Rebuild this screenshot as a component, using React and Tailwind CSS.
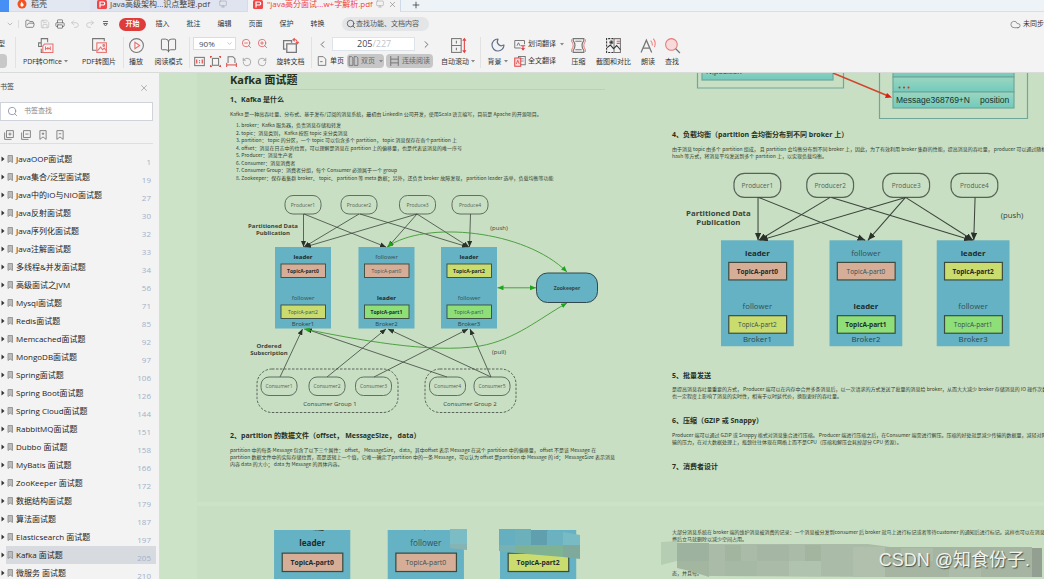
import React from "react";
import {
  FolderOpen, Save, Printer, Undo2, Redo2, ChevronDown, ChevronLeft, ChevronRight, Search, X, Plus,
  Monitor, BookOpen, CirclePlay, ZoomIn, ZoomOut, Moon, Cloud, RotateCcw, RotateCw,
} from "lucide-react";

const BOOKMARKS = [
  ["JavaOOP面试题", 1], ["Java集合/泛型面试题", 19], ["Java中的IO与NIO面试题", 27], ["Java反射面试题", 30],
  ["Java序列化面试题", 32], ["Java注解面试题", 33], ["多线程&并发面试题", 34], ["高级面试之JVM", 56],
  ["Mysql面试题", 71], ["Redis面试题", 85], ["Memcached面试题", 92], ["MongoDB面试题", 97],
  ["Spring面试题", 106], ["Spring Boot面试题", 126], ["Spring Cloud面试题", 144], ["RabbitMQ面试题", 151],
  ["Dubbo 面试题", 158], ["MyBatis 面试题", 166], ["ZooKeeper 面试题", 172], ["数据结构面试题", 179],
  ["算法面试题", 187], ["Elasticsearch 面试题", 197], ["Kafka 面试题", 205], ["微服务 面试题", 210],
];

const Ico = ({ children, w = 16, h = 16, className = "" }) => (
  <svg width={w} height={h} viewBox="0 0 16 16" fill="none" stroke="#777" strokeWidth="1" className={className} aria-hidden="true">
    {children}
  </svg>
);

const PdfBadge = () => (
  <svg width="10" height="9" viewBox="0 0 10 9" aria-hidden="true">
    <rect width="10" height="9" rx="1.5" fill="#f04848" />
    <path d="M3 7.500V2h3.2a1.5 1.5 0 0 1 0 3H3" fill="none" stroke="#fff" strokeWidth="1.2" />
  </svg>
);

function TabBar() {
  return (
    <div className="flex h-3 shrink-0 items-stretch overflow-hidden bg-[#eef3f8] text-[8px] leading-[8px] text-[#444]">
      <div className="w-[9px] shrink-0 bg-[#458ff5]" />
      <div className="flex w-[81px] shrink-0 items-start gap-1 border-b border-[#d3dce8] bg-[#e3e7f1] pl-2">
        <svg width="10" height="9" viewBox="0 0 10 9" aria-hidden="true">
          <circle cx="5" cy="4" r="4.5" fill="#f4511e" />
          <path d="M4 6.5Q2.5 4 5 1.5Q5 3 6.5 4Q7 6 5.500 6.500Z" fill="#fff" />
        </svg>
        <span>稻壳</span>
      </div>
      <div className="flex w-[158px] shrink-0 items-start border-b border-r border-[#d3dce8] bg-[#dfe4f0] pl-[7px]">
        <PdfBadge />
        <span className="ml-[3px] w-[98px] whitespace-nowrap">Java高级架构...识点整理.pdf</span>
        <Monitor size={8} strokeWidth={1.5} className="ml-[11px] text-[#999]" />
      </div>
      <div className="flex w-[153px] shrink-0 items-start border-r border-[#cfdae6] bg-[#f3f3f3] pl-[5px] text-[#f04040]">
        <PdfBadge />
        <span className="ml-[4px] whitespace-nowrap">"java高分面试...w+字解析.pdf</span>
        <Monitor size={8} strokeWidth={1.5} className="ml-[3px] shrink-0 text-[#999]" />
        <button aria-label="关闭标签" className="ml-1"><X size={9} strokeWidth={1.5} className="text-[#777]" /></button>
      </div>
      <div className="flex flex-1 items-start border-b border-[#d5e0e8] pl-[10px]">
        <button aria-label="新建标签"><Plus size={10} strokeWidth={2} className="text-[#444]" /></button>
      </div>
    </div>
  );
}

function MenuBar() {
  const quick = [["打开", FolderOpen, "text-[#555]"], ["保存", Save, "text-[#bbb]"], ["打印", Printer, "text-[#555]"], ["撤销", Undo2, "text-[#bbb]"], ["重做", Redo2, "text-[#bbb]"]];
  const menus = ["插入", "批注", "编辑", "页面", "保护", "转换"];
  return (
    <div className="flex h-6 shrink-0 items-center text-[7px] text-[#333]">
      <button aria-label="展开" className="flex w-[19px] items-center border-r border-[#ddd] pl-[6px]"><ChevronDown size={8} strokeWidth={1.5} className="text-[#888]" /></button>
      <div className="flex w-[100px] items-center gap-[5px] pl-[6px]">
        {quick.map(([label, Icon, color]) => (
          <button key={label} aria-label={label}><Icon size={10} strokeWidth={1.6} className={color} /></button>
        ))}
        <button aria-label="更多" className="pl-[3px]"><svg width="5" height="6" viewBox="0 0 5 6" fill="none" stroke="#666" aria-hidden="true"><path d="M0 .5H5M.5 2.500H4.500L2.500 5Z" /></svg></button>
      </div>
      <button className="h-[13px] w-[27px] rounded-full bg-[#e03b3b] font-bold text-white">开始</button>
      <nav className="flex w-[190px] pl-px">
        {menus.map((m) => <button key={m} className="w-[31px]">{m}</button>)}
      </nav>
      <label className="ml-[6px] flex h-[14px] w-[87px] items-center rounded-full bg-[#e3e5e7] pl-[4px]">
        <Search size={10} strokeWidth={2} className="shrink-0 text-[#555]" />
        <input aria-label="查找" placeholder="查找功能、文档内容" className="w-[72px] bg-transparent text-[7px] placeholder:text-[#555] placeholder:opacity-100" />
      </label>
      <div className="flex flex-1 items-center justify-end overflow-hidden">
        <button className="flex items-center gap-[2px] whitespace-nowrap"><Cloud size={11} strokeWidth={1.5} className="text-[#666]" />未同步</button>
      </div>
    </div>
  );
}

const Caret = () => <svg width="4" height="3" viewBox="0 0 4 3" className="ml-[2px]" aria-hidden="true"><path d="M0 0h4L2 2.500z" fill="#888" /></svg>;
const Tool = ({ label, w, children, sep, arrow }) => (
  <button className={`flex h-[31px] shrink-0 flex-col items-center justify-between whitespace-nowrap pb-[2px] ${w} ${sep ? "border-r border-[#e2e2e2]" : ""}`}>
    {children}
    <span className="flex items-center leading-[9px]">{label}{arrow && <Caret />}</span>
  </button>
);

function Toolbar() {
  return (
    <div className="flex h-[37px] shrink-0 items-start overflow-hidden border-b border-[#d8dcd8] pt-px text-[7px] text-[#333]">
      <div className="flex h-[31px] w-4 shrink-0 flex-col justify-between border-r border-[#e2e2e2]">
        <span className="-ml-[2px] pt-[2px] leading-[10px]">型</span>
        <span className="h-[14px] w-[7px] rounded-r-sm bg-[#c8c8c8]" />
      </div>
      <Tool label="PDF转Office" w="w-[59px]" arrow>
        <Ico w={17} h={17}><path d="M5 9H1.500V5.500H4V1.500H10V5M4 5.500V9M4 11V14.500H8" /><g stroke="#e87070"><path d="M7 6.500H15V14.500H5.500V8.500Z" fill="#f3f3f3" /><path d="M8 9V12.500M8 10.800H12.500M12.500 9V12.500M10.200 9.500V12" /></g></Ico>
      </Tool>
      <Tool label="PDF转图片" w="w-[49px]" sep>
        <Ico w={17} h={17}><path d="M5 12.500H1.500V1.500H12.500V4" /><g stroke="#e87070"><rect x="5.500" y="5.500" width="9" height="9" fill="#f3f3f3" /><path d="M6 13L9 9.500L11 12L12.500 10.500L14.500 13" /><circle cx="12" cy="8" r=".8" /></g></Ico>
      </Tool>
      <Tool label="播放" w="w-[24px]">
        <Ico w={17} h={17}><circle cx="8" cy="8" r="6.500" /><path d="M6.500 5L11 8L6.500 11Z" stroke="#e87070" /></Ico>
      </Tool>
      <Tool label="阅读模式" w="w-[42px]" sep><BookOpen size={17} strokeWidth={1.300} className="text-[#666]" /></Tool>
      <div className="flex h-[31px] w-[80px] shrink-0 flex-col justify-between pl-[3px]">
        <div className="flex items-center gap-[5px]">
          <span className="relative flex h-[13px] w-[43px] items-center border border-[#d9dde3] bg-white">
            <select aria-label="缩放比例" className="w-full appearance-none bg-transparent pl-[5px] text-[8px] leading-[11px] text-[#3c4a60]"><option>90%</option></select>
            <ChevronDown size={7} strokeWidth={1.500} className="pointer-events-none absolute right-[2px] text-[#888]" />
          </span>
          <button aria-label="缩小"><ZoomOut size={11} strokeWidth={1.800} className="text-[#e06060]" /></button>
          <button aria-label="放大"><ZoomIn size={11} strokeWidth={1.800} className="text-[#e06060]" /></button>
        </div>
        <div className="flex items-center gap-[5px] pb-px pl-px">
          <button aria-label="实际大小"><Ico w={11} h={11}><rect x="1" y="2" width="14" height="12" strokeWidth="1.500" /><path d="M4 5V11M12 5V11M8 6V7.500M8 9V10.500" stroke="#e04040" strokeWidth="1.600" /></Ico></button>
          <button aria-label="适合页面"><Ico w={11} h={11}><rect x="3.500" y="3.500" width="9" height="10" strokeWidth="1.500" /><path d="M0 1H3M1 0V3M13 1H16M15 0V3M0 15H3M1 13V16M13 15H16M15 13V16" stroke="#e04040" strokeWidth="1.400" /></Ico></button>
          <button aria-label="适合宽度"><Ico w={11} h={11}><path d="M3 10V1H10L13 4V10" strokeWidth="1.500" /><path d="M1 10V16M15 10V16M1 13H15" stroke="#e04040" strokeWidth="1.400" /></Ico></button>
          <button aria-label="向左旋转"><RotateCcw size={10} strokeWidth={1.600} className="text-[#888]" /></button>
          <button aria-label="向右旋转"><RotateCw size={10} strokeWidth={1.600} className="text-[#888]" /></button>
        </div>
      </div>
      <Tool label="旋转文档" w="w-[42px]" sep>
        <Ico w={17} h={17}><path d="M3.500 11.500H1.500V3.500H9V5.500M4.500 6.500H13.500V14.500H4.500Z" strokeWidth="1.200" /><path d="M10.500 2.500Q14.500 1.500 14.500 6M13 4.500L14.500 6.200L16 4.500M12 1L10.300 2.500L12 4" stroke="#e85555" /></Ico>
      </Tool>
      <div className="flex h-[31px] w-[124px] shrink-0 flex-col justify-between pl-[5px]">
        <div className="flex items-center">
          <button aria-label="上一页"><ChevronLeft size={11} strokeWidth={1.800} className="text-[#555]" /></button>
          <div className="ml-[4px] flex h-[14px] w-[83px] items-center justify-center border border-[#dce3ea] bg-white text-[9px]">
            <input aria-label="页码" defaultValue="205" className="w-[30px] bg-transparent text-right text-[#3c4a60]" />
            <span className="w-[32px] text-[#c0c4ca]">/227</span>
          </div>
          <button aria-label="下一页" className="ml-[6px]"><ChevronRight size={11} strokeWidth={1.800} className="text-[#555]" /></button>
        </div>
        <div className="flex h-[14px] items-center gap-[2px]">
          <button className="flex w-[28px] items-center gap-[3px] whitespace-nowrap"><Ico w={10} h={10} className="shrink-0"><path d="M2 1H10L14 5V15H2ZM5 9H9" strokeWidth="1.500" /></Ico>单页</button>
          <button className="flex h-[14px] w-[37px] items-center justify-center gap-[2px] whitespace-nowrap rounded-sm bg-[#c6c6c6] text-[#666]"><Ico w={11} h={10} className="shrink-0"><path d="M1 1H5L7 3V15H1ZM9 1H13L15 3V15H9Z" strokeWidth="1.500" /></Ico>双页<Caret /></button>
          <button className="flex h-[14px] w-[47px] items-center justify-center gap-[2px] whitespace-nowrap rounded-sm bg-[#c6c6c6] text-[#666]"><Ico w={11} h={10} className="shrink-0"><path d="M2 0V16M14 0V16M2 5H14M2 11H14" strokeWidth="1.600" /></Ico>连续阅读</button>
        </div>
      </div>
      <Tool label="自动滚动" w="w-[45px]" sep arrow>
        <Ico w={17} h={17}><rect x="1.500" y="1.500" width="9" height="13" /><path d="M1.500 8H10.500M6 3.500V6M6 10V12.500" /><path d="M13.500 1.500V14.500M12 3.500L13.500 1.500L15 3.500M12 12.500L13.500 14.500L15 12.500" stroke="#e04040" /></Ico>
      </Tool>
      <Tool label="背景" w="w-[33px]" arrow><Moon size={16} strokeWidth={1.800} className="text-[#62708c]" /></Tool>
      <div className="flex h-[31px] w-[52px] shrink-0 flex-col justify-between">
        <button className="flex h-[15px] items-center gap-[2px] whitespace-nowrap"><Ico w={12} h={12} className="shrink-0"><path d="M9 12H1V2H14V7M4 9L6 5L8 9" strokeWidth="1.300" /><path d="M9 9H15M12 9V14M10 12L12 14.500L14 12" stroke="#e04040" strokeWidth="1.500" /></Ico>划词翻译<Caret /></button>
        <button className="flex h-[14px] items-center gap-[2px] whitespace-nowrap"><Ico w={12} h={12} className="shrink-0"><rect x="6" y="2" width="9" height="11" strokeWidth="1.300" /><path d="M9 5H13M9 8H13" /><rect x="1" y="4" width="8" height="11" fill="#f8dada" stroke="#e04040" strokeWidth="1.300" /><path d="M3 12L5 7L7 12" stroke="#e04040" /></Ico>全文翻译</button>
      </div>
      <Tool label="压缩" w="w-[25px]">
        <Ico w={17} h={17}><path d="M3 1.500H13V3.500Q9.500 8 13 12.500V14.500H3V12.500Q6.500 8 3 3.500ZM5 4H11M5 12H11" strokeWidth="1.100" /><path d="M1.500 2V4Q4.500 8 1.500 12V14M14.500 2V4Q11.500 8 14.500 12V14" stroke="#f08a8a" /></Ico>
      </Tool>
      <Tool label="截图和对比" w="w-[45px]">
        <Ico w={17} h={17}><path d="M8 1.500H1.500V14.500H8" strokeDasharray="2 1" stroke="#333" /><path d="M8.500 1.500H14.500V14.500H8.500Z" /><path d="M2 10L5 7.500L8 11L11 8L14.500 12" stroke="#333" /><circle cx="6" cy="5" r="1.500" fill="#333" /><path d="M11 4H14M11 6H14" stroke="#e85555" /></Ico>
      </Tool>
      <Tool label="朗读" w="w-[24px]">
        <Ico w={17} h={17}><path d="M1 14.500L6 3L11 14.500M3 10.500H9" strokeWidth="1.200" /><path d="M10 3.500Q12 5.500 11.500 8M12.500 1.500Q15.500 5 13.500 9.500" stroke="#f08080" /></Ico>
      </Tool>
      <Tool label="查找" w="w-[24px]">
        <Ico w={17} h={17}><circle cx="7" cy="7" r="5.500" fill="#f8dada" stroke="#e87878" /><path d="M11 11L15 15" stroke="#777" strokeWidth="1.200" /></Ico>
      </Tool>
    </div>
  );
}

function Sidebar() {
  return (
    <aside className="flex w-[160px] shrink-0 flex-col overflow-hidden border-r border-[#d9dcdc] bg-[#f3f3f3] text-[#222]">
      <div className="flex h-[29px] shrink-0 items-center justify-between pr-[10px] text-[7px]">
        <span className="text-[#444]">书签</span>
        <button aria-label="关闭书签"><X size={10} strokeWidth={1.500} className="text-[#888]" /></button>
      </div>
      <label className="flex h-[19px] w-[153px] shrink-0 items-center gap-[6px] border border-[#cfd4dc] bg-white pl-[6px]">
        <Search size={11} strokeWidth={1.800} className="shrink-0 text-[#7f8ea3]" />
        <input aria-label="书签查找" placeholder="书签查找" className="w-24 text-[7px] placeholder:text-[#888] placeholder:opacity-100" />
      </label>
      <div className="flex h-[23px] w-[153px] shrink-0 items-center gap-[7px] border-b border-[#dedede] pl-[4px] pt-[5px]">
        {["M4 1H15V12H4ZM1 4V15H12M7 6.500H12M9.500 4V9", "M4 1H15V12H4ZM1 4V15H12M7 6.500H12", "M3 1H13V15L8 11L3 15ZM6 6H10M8 4V8", "M3 1H13V15L8 11L3 15ZM6 6H10"].map((d, i) => (
          <button key={d} aria-label={["展开", "折叠", "添加书签", "删除书签"][i]}><Ico w={10} h={10}><path d={d} strokeWidth="1.400" /></Ico></button>
        ))}
      </div>
      <ul className="mt-[6px] flex flex-col">
        {BOOKMARKS.map(([name, page]) => (
          <li key={name} className="flex h-[18px] shrink-0 items-center">
            <svg width="6" height="6" viewBox="0 0 6 6" aria-hidden="true"><path d="M1.500 .5L4.500 3L1.500 5.500Z" fill="#333" /></svg>
            <a href={`#page-${page}`} className={`flex h-[18px] w-[150px] items-center whitespace-nowrap pl-px pr-[5px] ${page === 205 ? "bg-[#d7dbe0]" : ""}`}>
              <svg width="7" height="8" viewBox="0 0 7 8" fill="#bbb" stroke="#999" aria-hidden="true"><path d="M1 .5H5.500V7.500L3.200 6L1 7.500Z" /></svg>
              <span className="ml-[2px] flex-1 text-[8px] leading-[18px]">{name}</span>
              <span className="pt-[6px] text-[8px] leading-3 text-[#a3b1c8]">{page}</span>
            </a>
          </li>
        ))}
      </ul>
    </aside>
  );
}

const Pill = ({ x, y, label }) => (
  <g>
    <rect x={x} y={y} width="36" height="18.500" rx="8" fill="none" stroke="#566356" strokeWidth=".9" />
    <text x={x + 18} y={y + 11} fontSize="5" fill="#566356" textAnchor="middle">{label}</text>
  </g>
);

const BROKERS = [
  [275, "Broker1", ["leader", "TopicA-part0", "#d6ae98", true], ["follower", "TopicA-part2", "#cbdc6e", false]],
  [358.500, "Broker2", ["follower", "TopicA-part0", "#d6ae98", false], ["leader", "TopicA-part1", "#8fdf78", true]],
  [441, "Broker3", ["leader", "TopicA-part2", "#cbdc6e", true], ["follower", "TopicA-part1", "#8fdf78", false]],
];

function Cluster({ viewBox, width, height, full, className }) {
  return (
    <svg viewBox={viewBox} width={width} height={height} className={`block shrink-0 font-['Open_Sans','Noto_Sans_CJK_SC',sans-serif] ${className}`} role="img" aria-label="Kafka 分区示意图">
      <defs>
        <marker id="tip" markerUnits="userSpaceOnUse" markerWidth="7" markerHeight="5" refX="6" refY="2.500" orient="auto"><path d="M0 0L6 2.500L0 5Z" fill="#2a302a" /></marker>
        <marker id="greenTip" markerUnits="userSpaceOnUse" markerWidth="7" markerHeight="5" refX="6" refY="2.500" orient="auto-start-reverse"><path d="M0 0L6 2.500L0 5Z" fill="#1ea51e" /></marker>
      </defs>
      {BROKERS.map(([x, name, ...parts]) => (
        <g key={name} textAnchor="middle">
          <rect x={x} y="247" width="56" height="81.500" fill="#64b2c3" />
          {parts.map(([role, topic, fill, strong], i) => (
            <g key={role} fontWeight={strong ? 700 : 400} fill={strong ? "#1c2b2e" : "#355055"}>
              <text x={x + 28} y={259 + i * 41} fontSize="6">{role}</text>
              <rect x={x + 6} y={264 + i * 41} width="44.500" height="13.500" fill={fill} stroke="#3b4a3c" strokeWidth=".9" />
              <text x={x + 28} y={272.700 + i * 41} fontSize="5">{topic}</text>
            </g>
          ))}
          <text x={x + 28} y="325.500" fontSize="6" fill="#28464d">{name}</text>
        </g>
      ))}
      <Pill x={285} y={195.500} label="Producer1" />
      <Pill x={341} y={195.500} label="Producer2" />
      <Pill x={399.500} y={195.500} label="Produce3" />
      <Pill x={452} y={195.500} label="Produce4" />
      <g stroke="#3c453c" strokeWidth=".8" fill="none">
        {["M303.500 214V247", "M304 214L386 247", "M359 214L304 247", "M360 214L468 247", "M417 214L305 247", "M417 214L388 247", "M417 214L469 247", "M470.500 214L469.500 247"].map((d) => <path key={d} d={d} markerEnd="url(#tip)" />)}
      </g>
      <g fontSize="6" textAnchor="middle" fill="#3a443a">
        <text x="273" y="228" fontWeight="700">Partitioned Data</text>
        <text x="273" y="235" fontWeight="700">Publication</text>
        <text x="499" y="230">(push)</text>
      </g>
      {full && (
        <g>
          <g stroke="#3c453c" strokeWidth=".8" fill="none">
            {["M280 377L302.500 329", "M327 377L386 329", "M374 377L468 329", "M447 377L306 329", "M491 377L388 329", "M491 377L470 329"].map((d) => <path key={d} d={d} markerEnd="url(#tip)" />)}
            <rect x="257" y="369" width="141" height="43.500" rx="15" strokeDasharray="2.500 1.500" />
            <rect x="425" y="369" width="91" height="43.500" rx="15" strokeDasharray="2.500 1.500" />
          </g>
          <Pill x={261} y={377} label="Consumer1" />
          <Pill x={309} y={377} label="Consumer2" />
          <Pill x={355.500} y={377} label="Consumer3" />
          <Pill x={429.500} y={377} label="Consumer4" />
          <Pill x={474} y={377} label="Consumer5" />
          <g fill="none" stroke="#3f9a32" strokeWidth=".9">
            <path d="M387 247C425 220 525 230 567 272" markerStart="url(#greenTip)" markerEnd="url(#greenTip)" />
            <path d="M497.500 287.800H536" markerStart="url(#greenTip)" markerEnd="url(#greenTip)" />
            <path d="M304 329C355 339 430 354 480 346C515 340 540 318 567 303" markerStart="url(#greenTip)" markerEnd="url(#greenTip)" />
          </g>
          <rect x="536.500" y="273" width="61" height="29.500" rx="11" fill="#64b2c3" stroke="#33484d" />
          <g textAnchor="middle" fontSize="6" fill="#3a443a">
            <text x="567" y="290" fontSize="5" fontWeight="700">Zookeeper</text>
            <text x="269" y="347.500" fontWeight="700">Ordered</text>
            <text x="269" y="354.500" fontWeight="700">Subscription</text>
            <text x="499" y="353.500">(pull)</text>
            <text x="330" y="406">Consumer Group 1</text>
            <text x="470" y="406">Consumer Group 2</text>
          </g>
        </g>
      )}
    </svg>
  );
}

const H2 = ({ children, className }) => <h2 className={`whitespace-nowrap text-[7px] font-bold leading-[10px] text-[#26301f] ${className}`}>{children}</h2>;
const Para = ({ lines, className }) => (
  <p className={`whitespace-nowrap font-['Noto_Sans_CJK_SC',sans-serif] text-[5px] leading-[7px] text-[#333d2f] ${className}`}>
    {lines.map((l) => <span key={l} className="block">{l}</span>)}
  </p>
);

const TERMS = [
  "broker：Kafka 服务器，负责消息存储和转发",
  "topic：消息类别， Kafka 按照 topic 来分类消息",
  "partition： topic 的分区，一个 topic 可以包含多个 partition， topic 消息保存在各个partition 上",
  "offset：消息在日志中的位置，可以理解是消息在 partition 上的偏移量，也是代表该消息的唯一序号",
  "Producer：消息生产者",
  "Consumer：消息消费者",
  "Consumer Group：消费者分组，每个 Consumer 必须属于一个 group",
  "Zookeeper：保存着集群 broker、 topic、 partition 等 meta 数据；另外，还负责 broker 故障发现， partition leader 选举，负载均衡等功能",
];

function MessageLog() {
  return (
    <svg width="366" height="48" viewBox="672 73 366 48" className="block font-['Liberation_Sans',sans-serif]" role="img" aria-label="消息索引示意图">
      <defs><linearGradient id="row" x2="0" y2="1"><stop offset="0" stopColor="#9bd6c0" /><stop offset="1" stopColor="#72cabc" /></linearGradient></defs>
      <g fill="none" stroke="#6fa79c" strokeWidth="1.200">
        <path d="M697.500 70V88H843.500V70M879.500 70V118.500H1027.500V70" />
        <rect x="702" y="65" width="131" height="15" fill="url(#row)" />
        <rect x="893" y="62" width="121" height="15" fill="url(#row)" />
        <rect x="893" y="77" width="121" height="15" fill="url(#row)" />
        <rect x="893" y="92" width="121" height="16" fill="url(#row)" />
      </g>
      <text x="706" y="74" fontSize="8" fill="#24483f">N,position</text>
      <g fill="#d03020"><circle cx="899.500" cy="87.500" r="1" /><circle cx="904" cy="87.500" r="1" /><circle cx="908.500" cy="87.500" r="1" /></g>
      <text x="896" y="103" fontSize="8.500" fill="#16332d">Message368769+N</text>
      <text x="980" y="103" fontSize="8.500" fill="#16332d">position</text>
      <path d="M833 73L887 95.500" stroke="#d0452c" strokeWidth="1.500" />
      <path d="M892 97.500L885 98L887 93Z" fill="#d81e10" />
    </svg>
  );
}

function Document() {
  return (
    <main className="relative flex min-w-0 flex-1 flex-col gap-1 overflow-hidden bg-[#cce3c8] pl-[37px]">
      <div className="flex h-[429px] shrink-0">
        <section className="w-[441px] shrink-0 bg-[#c8dfc3] pl-[33px]">
          <h1 className="w-[375px] border-b border-[#bbd0b6] pb-[2px] text-[11px] font-bold leading-[14px] text-[#26301f]">Kafka 面试题</h1>
          <H2 className="mt-[5px]">1、Kafka 是什么</H2>
          <Para className="mt-[5px]" lines={["Kafka 是一种高吞吐量、分布式、基于发布/订阅的消息系统，最初由 LinkedIn 公司开发，使用Scala 语言编写，目前是 Apache 的开源项目。"]} />
          <ol className="mt-[4px] flex h-[60px] flex-col justify-between whitespace-nowrap pl-[6px] font-['Noto_Sans_CJK_SC',sans-serif] text-[5px] leading-[7px] text-[#333d2f]">
            {TERMS.map((t, i) => <li key={t}>{i + 1}. {t}</li>)}
          </ol>
          <Cluster full viewBox="245 190 360 228" width={360} height={228} className="ml-[15px] mt-[9px]" />
          <H2 className="mt-[13px]">2、partition 的数据文件（offset， MessageSize， data）</H2>
          <Para className="mt-[5px]" lines={[
            "partition 中的每条 Message 包含了以下三个属性： offset， MessageSize， data，其中offset 表示 Message 在这个 partition 中的偏移量， offset 不是该 Message 在",
            "partition 数据文件中的实际存储位置，而是逻辑上一个值，它唯一确定了partition 中的一条 Message，可以认为 offset 是partition 中 Message 的 id； MessageSize 表示消息",
            "内容 data 的大小； data 为 Message 的具体内容。",
          ]} />
        </section>
        <section className="w-[441px] shrink-0 bg-[#c8dfc3] pl-[34px]">
          <MessageLog />
          <H2 className="mt-[9px]">4、负载均衡（partition 会均衡分布到不同 broker 上）</H2>
          <Para className="mt-[5px]" lines={[
            "由于消息 topic 由多个 partition 组成， 且 partition 会均衡分布到不同 broker 上，因此，为了有效利用 broker 集群的性能，提高消息的吞吐量， producer 可以通过随机或者",
            "hash 等方式，将消息平均发送到多个 partition 上，以实现负载均衡。",
          ]} />
          <Cluster viewBox="245 190 277 142" width={360} height={185} className="ml-[10px] mt-[7px]" />
          <H2 className="mt-[20px]">5、批量发送</H2>
          <Para className="mt-[4px]" lines={[
            "是提高消息吞吐量重要的方式， Producer 端可以在内存中合并多条消息后，以一次请求的方式发送了批量的消息给 broker，从而大大减少 broker 存储消息的 IO 操作次数。但",
            "也一定程度上影响了消息的实时性，相当于以时延代价，换取更好的吞吐量。",
          ]} />
          <H2 className="mt-[17px]">6、压缩（GZIP 或 Snappy）</H2>
          <Para className="mt-[5px]" lines={[
            "Producer 端可以通过 GZIP 或 Snappy 格式对消息集合进行压缩。 Producer 端进行压缩之后，在Consumer 端需进行解压。压缩的好处就是减少传输的数据量，减轻对网络传",
            "输的压力，在对大数据处理上，瓶颈往往体现在网络上而不是CPU（压缩和解压会耗掉部分 CPU 资源）。",
          ]} />
          <H2 className="mt-[17px]">7、消费者设计</H2>
        </section>
      </div>
      <div className="flex flex-1">
        <section className="w-[441px] shrink-0 overflow-hidden bg-[#c8dfc3] pl-[76px] pt-[24px]">
          <Cluster viewBox="275 247 224 36" width={307} height={49} className="" />
        </section>
        <section className="w-[441px] shrink-0 bg-[#c8dfc3] pl-[34px] pt-[22px]">
          <Para className="" lines={[
            "大部分消息系统在 broker 端的维护消息被消费的记录：一个消息被分发到consumer 后 broker 就马上进行标记或者等待customer 的通知后进行标记。这样也可以在消息在消",
            "费后立马就删除以减少空间占用。",
          ]} />
          <Para className="mt-[27px]" lines={["态，并且每。"]} />
        </section>
      </div>
      <svg width="884" height="56" viewBox="160 523 884 56" className="absolute bottom-0 left-0" aria-hidden="true">
        <path d="M450 529H467V549.500L450 548Z" fill="#7bbcc5" /><path d="M450 544H467V550L450 548Z" fill="#86b4b5" />
        <rect x="499" y="529" width="16" height="16" fill="#65afc0" /><path d="M515 529H531V545H515Z" fill="#6cb0bb" /><path d="M531 530H548V545H531Z" fill="#60a0ae" /><path d="M547 531L563 532V545H547Z" fill="#6cb1bf" /><path d="M563 532L580 535V547H563Z" fill="#78bbc4" />
        <path d="M499 545H515V553L499 551Z" fill="#76b1b3" /><path d="M515 545H563V557L515 553Z" fill="#7fb193" /><path d="M563 545H580V559L563 557Z" fill="#7faa9b" />
        <path d="M661 542L677 541V561L661 565Z" fill="#b5cdb2" /><rect x="677" y="543" width="32" height="18" fill="#9eb39f" />
        <path d="M709 544H868L890 547V577L709 576Z" fill="#aabba7" /><path d="M677 561H709V577L690 571L677 568Z" fill="#a3b69f" />
        <rect x="725" y="545" width="16" height="16" fill="#a2b59f" /><rect x="757" y="545" width="32" height="16" fill="#a6b6a4" /><rect x="725" y="561" width="32" height="15" fill="#a5b9a4" /><rect x="805" y="545" width="16" height="16" fill="#a3b49f" /><rect x="789" y="561" width="32" height="15" fill="#b0c3ae" /><rect x="853" y="547" width="37" height="30" fill="#b0c0ad" />
        <path d="M885 547H1032V577H885Z" fill="#a6b5a1" /><rect x="901" y="548" width="32" height="13" fill="#adbba9" /><rect x="949" y="561" width="32" height="16" fill="#acbca8" /><rect x="1032" y="548" width="10" height="29" fill="#929f91" />
      </svg>
      <div className="absolute bottom-[7px] right-[14px] whitespace-nowrap font-['Liberation_Sans','Noto_Sans_CJK_SC',sans-serif] text-[18px] leading-6 text-[#f0f3ee] [text-shadow:1px_1px_1px_#4a554a]">CSDN @知食份子.</div>
    </main>
  );
}

export default function App() {
  return (
    <div className="flex h-screen flex-col overflow-hidden bg-[#f3f3f3] font-['Open_Sans','Noto_Sans_CJK_SC',sans-serif]">
      <TabBar />
      <MenuBar />
      <Toolbar />
      <div className="flex min-h-0 flex-1">
        <Sidebar />
        <Document />
      </div>
    </div>
  );
}
